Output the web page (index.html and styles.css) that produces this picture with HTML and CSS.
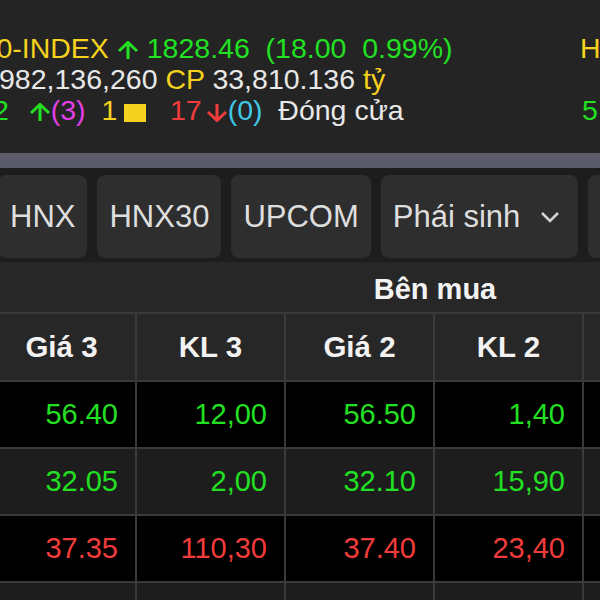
FILE: index.html
```html
<!DOCTYPE html>
<html lang="vi">
<head>
<meta charset="utf-8">
<title>Bảng giá</title>
<link rel="stylesheet" href="styles.css">
</head>
<body>
<div class="page">
  <header class="indices">
    <div class="idx idx-main">
      <div class="line line-first"><span class="yellow">VN30-INDEX</span> <svg class="arrow green-stroke" viewBox="0 0 22 18" width="22" height="18"><path d="M2 10 L11 1.5 L20 10 M11 1.5 V18"/></svg> <span class="green">1828.46&nbsp;&nbsp;(18.00&nbsp;&nbsp;0.99%)</span></div>
      <div class="line line-second"><span class="white">982,136,260</span> <span class="yellow">CP</span> <span class="white">33,810.136</span> <span class="yellow">tỷ</span></div>
      <div class="line line-third"><span class="green">2</span>&nbsp;&nbsp;<svg class="arrow arrow-tight green-stroke" viewBox="0 0 22 18" width="22" height="18"><path d="M2 10 L11 1.5 L20 10 M11 1.5 V18"/></svg><span class="magenta">(3)</span>&nbsp;&nbsp;<span class="yellow">1</span> <span class="square"></span>&nbsp;&nbsp;&nbsp;<span class="red">17</span><svg class="arrow arrow-down red-stroke" viewBox="0 0 22 18" width="22" height="18"><path d="M2 8 L11 16.5 L20 8 M11 16.5 V0"/></svg><span class="cyan">(0)</span>&nbsp;&nbsp;<span class="white">Đóng cửa</span></div>
    </div>
    <div class="idx idx-next">
      <div class="line"><span class="yellow">HNX-INDEX</span></div>
      <div class="line">&nbsp;</div>
      <div class="line line-next-third"><span class="green">5</span></div>
    </div>
  </header>

  <div class="band"></div>

  <nav class="tabs">
    <div class="tab">HNX</div>
    <div class="tab">HNX30</div>
    <div class="tab">UPCOM</div>
    <div class="tab">Phái sinh<svg class="chevron" viewBox="0 0 20 12" width="20" height="12"><path d="M2 2 L10 10 L18 2"/></svg></div>
    <div class="tab">Chứng quyền</div>
  </nav>

  <div class="board">
    <div class="group">Bên mua</div>
    <div class="group group-right">Khớp lệnh</div>

    <div class="th">Giá 3</div>
    <div class="th">KL 3</div>
    <div class="th">Giá 2</div>
    <div class="th">KL 2</div>
    <div class="th">Giá 1</div>
    <div class="th">KL 1</div>
    <div class="th">Giá</div>
    <div class="th">KL</div>

    <div class="td odd up">56.40</div>
    <div class="td odd up">12,00</div>
    <div class="td odd up">56.50</div>
    <div class="td odd up">1,40</div>
    <div class="td odd up">56.60</div>
    <div class="td odd up">3,10</div>
    <div class="td odd up">56.70</div>
    <div class="td odd up">2,00</div>

    <div class="td even up">32.05</div>
    <div class="td even up">2,00</div>
    <div class="td even up">32.10</div>
    <div class="td even up">15,90</div>
    <div class="td even up">32.15</div>
    <div class="td even up">4,20</div>
    <div class="td even up">32.20</div>
    <div class="td even up">1,00</div>

    <div class="td odd down">37.35</div>
    <div class="td odd down">110,30</div>
    <div class="td odd down">37.40</div>
    <div class="td odd down">23,40</div>
    <div class="td odd down">37.45</div>
    <div class="td odd down">8,50</div>
    <div class="td odd down">37.50</div>
    <div class="td odd down">5,00</div>

    <div class="td even up">24.10</div>
    <div class="td even up">6,20</div>
    <div class="td even up">24.15</div>
    <div class="td even up">3,30</div>
    <div class="td even up">24.20</div>
    <div class="td even up">9,10</div>
    <div class="td even up">24.25</div>
    <div class="td even up">1,20</div>
  </div>
</div>
</body>
</html>
```

FILE: styles.css
```css
html, body {
  margin: 0;
  padding: 0;
  width: 600px;
  height: 600px;
  overflow: hidden;
  background: #1c1c1c;
}

body {
  font-family: "Liberation Sans", Arial, sans-serif;
  color: #e8e8e8;
}

.page {
  width: 600px;
  height: 600px;
  overflow: hidden;
}

/* ---------- index header ---------- */
.indices {
  display: flex;
  height: 153px;
  background: #242424;
  font-size: 28.5px;
  white-space: nowrap;
}

.idx {
  padding-top: 33px;
}

.idx-main {
  flex: 0 0 580px;
}

.line {
  height: 31px;
  line-height: 31px;
}

.line-first { margin-left: -59px; }
.line-second { margin-left: -1px; }
.line-third { margin-left: -7px; }
.line-next-third { margin-left: 2px; }

.yellow { color: #f5d21e; }
.green { color: #22e022; }
.white { color: #e8e8e8; }
.red { color: #f23c3c; }
.magenta { color: #e23fe6; }
.cyan { color: #3ec8e6; }

.arrow {
  display: inline-block;
  vertical-align: -1px;
  fill: none;
  stroke-width: 3;
  stroke-linecap: butt;
  stroke-linejoin: miter;
}

.arrow-tight { margin-left: 4px; }
.arrow-down { margin-left: 4px; vertical-align: -2px; }

.green-stroke { stroke: #22e022; }
.red-stroke { stroke: #f23c3c; }

.square {
  display: inline-block;
  width: 22px;
  height: 18px;
  background: #f5d21e;
  vertical-align: -2px;
  margin-left: -1px;
}

/* ---------- band ---------- */
.band {
  height: 15px;
  background: #5b5b69;
}

/* ---------- tabs ---------- */
.tabs {
  display: flex;
  gap: 10px;
  background: #1d1d1d;
  padding: 7px 0 4px;
  margin-left: -2px;
  white-space: nowrap;
}

.tab {
  flex: none;
  display: flex;
  align-items: center;
  height: 83px;
  padding: 0 12px;
  background: #2e2e2e;
  border-radius: 8px;
  font-size: 31px;
  color: #dedede;
}

.chevron {
  margin-left: 20px;
  margin-right: 6px;
  fill: none;
  stroke: #d2d2d2;
  stroke-width: 2.6;
}

/* ---------- board ---------- */
.board {
  display: grid;
  grid-template-columns: repeat(8, 149px);
  margin-left: -12px;
  width: max-content;
  background: #272727;
}

.group {
  grid-column: 1 / span 6;
  box-sizing: border-box;
  height: 52px;
  padding-top: 5px;
  line-height: 44px;
  text-align: center;
  font-weight: bold;
  font-size: 29px;
  color: #f2f2f2;
  border-bottom: 2px solid #3a3a3a;
}

.group-right {
  grid-column: 7 / span 2;
}

.th {
  box-sizing: border-box;
  height: 68px;
  line-height: 66px;
  text-align: center;
  font-weight: bold;
  font-size: 29.5px;
  color: #f2f2f2;
  border-right: 2px solid #3a3a3a;
  border-bottom: 2px solid #3a3a3a;
}

.td {
  box-sizing: border-box;
  height: 67px;
  line-height: 65px;
  padding-right: 17px;
  text-align: right;
  font-size: 29px;
  border-right: 2px solid #3a3a3a;
  border-bottom: 2px solid #3a3a3a;
}

.odd { background: #000000; }
.even { background: #1d1d1d; }

.up { color: #22e022; }
.down { color: #f23c3c; }
```
